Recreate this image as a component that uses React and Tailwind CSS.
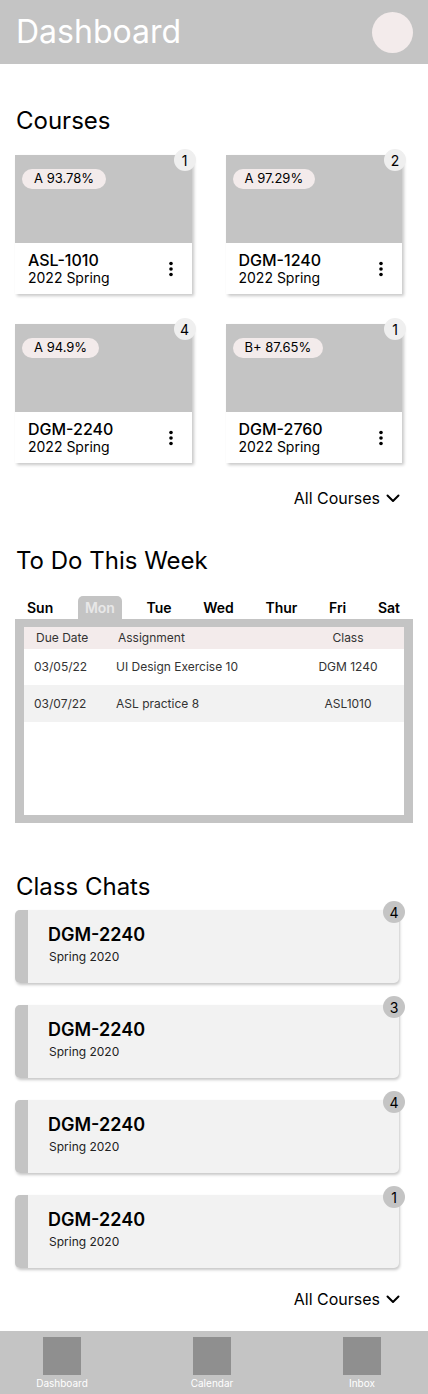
import React from "react";

const courses = [
  { grade: "A 93.78%", name: "ASL-1010", term: "2022 Spring", n: 1 },
  { grade: "A 97.29%", name: "DGM-1240", term: "2022 Spring", n: 2 },
  { grade: "A 94.9%", name: "DGM-2240", term: "2022 Spring", n: 4 },
  { grade: "B+ 87.65%", name: "DGM-2760", term: "2022 Spring", n: 1 },
];

const days = ["Sun", "Mon", "Tue", "Wed", "Thur", "Fri", "Sat"];

const chats = [4, 3, 4, 1];

function Kebab() {
  return (
    <svg width="6" height="16" viewBox="0 0 6 16" className="text-black">
      <circle cx="3" cy="2.5" r="1.8" fill="currentColor" />
      <circle cx="3" cy="8" r="1.8" fill="currentColor" />
      <circle cx="3" cy="13.5" r="1.8" fill="currentColor" />
    </svg>
  );
}

function AllCourses() {
  return (
    <div className="flex justify-end pr-[28px]">
      <div className="flex items-center gap-[6px] text-[16px] leading-6 text-black">
        <span>All Courses</span>
        <svg width="14" height="9" viewBox="0 0 14 9" fill="none">
          <path d="M1.5 1.5L7 7L12.5 1.5" stroke="black" strokeWidth="2" strokeLinecap="round" strokeLinejoin="round" />
        </svg>
      </div>
    </div>
  );
}

export default function App() {
  return (
    <div className="w-[428px] min-h-[1394px] bg-white flex flex-col" style={{ fontFamily: "Inter, 'Noto Sans', sans-serif" }}>
      <header className="h-16 bg-[#c4c4c4] flex items-center justify-between pl-4 pr-[15px]">
        <h1 className="text-[32px] leading-none text-white font-normal">Dashboard</h1>
        <div className="w-[41px] h-[41px] rounded-full bg-[#f3ebeb]" />
      </header>

      <main className="flex-1 flex flex-col">
        <h2 className="mt-[41px] pl-4 text-[24px] leading-8 text-black">Courses</h2>
        <div className="mt-[18px] ml-[15px] w-[387px] grid grid-cols-2 gap-x-[34px] gap-y-[30px]">
          {courses.map((c, i) => (
            <div key={i} className="relative shadow-[2px_2px_3px_rgba(0,0,0,0.22)]">
              <div className="h-[88px] bg-[#c4c4c4] pt-[10px] pl-[7px]">
                <span className="inline-flex items-center h-[20px] px-[12px] rounded-full bg-[#f3ebeb] text-[13px] text-black leading-none">
                  {c.grade}
                </span>
              </div>
              <div className="h-[51px] bg-white flex items-center justify-between pl-[13px] pr-[18px]">
                <div className="flex flex-col">
                  <span className="text-[16px] leading-[18px] text-black font-medium">{c.name}</span>
                  <span className="text-[14px] leading-[18px] text-black">{c.term}</span>
                </div>
                <Kebab />
              </div>
              <div className="absolute -top-[6px] -right-[4px] w-[22px] h-[22px] rounded-full bg-[#efefef] flex items-center justify-center text-[14px] text-black">
                {c.n}
              </div>
            </div>
          ))}
        </div>

        <div className="mt-[23px]">
          <AllCourses />
        </div>

        <h2 className="mt-[35px] pl-4 text-[24px] leading-8 text-black">To Do This Week</h2>

        <div className="mt-[19px] ml-[20px] w-[387px] h-[23px] flex justify-between items-end">
          {days.map((d) => (
            <div
              key={d}
              className={
                d === "Mon"
                  ? "h-[23px] px-[7px] flex items-center rounded-t-[5px] bg-[#c4c4c4] text-[14px] font-semibold text-[#e8e8e8]"
                  : "h-[23px] px-[7px] flex items-center text-[14px] font-semibold text-black"
              }
            >
              {d}
            </div>
          ))}
        </div>

        <div className="ml-[15px] w-[398px] h-[204px] bg-[#c4c4c4] pt-[8px] pb-[8px] px-[9px]">
          <div className="h-full bg-white flex flex-col text-[12px] text-[#333333]">
            <div className="h-[22px] bg-[#f3ebeb] flex items-center">
              <div className="w-[92px] pl-[12px]">Due Date</div>
              <div className="w-[192px] pl-[2px]">Assignment</div>
              <div className="w-[80px] text-center">Class</div>
            </div>
            <div className="h-[36px] bg-white flex items-center">
              <div className="w-[92px] pl-[10px]">03/05/22</div>
              <div className="w-[192px]">UI Design Exercise 10</div>
              <div className="w-[80px] text-center">DGM 1240</div>
            </div>
            <div className="h-[37px] bg-[#f2f2f2] flex items-center">
              <div className="w-[92px] pl-[10px]">03/07/22</div>
              <div className="w-[192px]">ASL practice 8</div>
              <div className="w-[80px] text-center">ASL1010</div>
            </div>
          </div>
        </div>

        <h2 className="mt-[48px] pl-4 text-[24px] leading-8 text-black">Class Chats</h2>

        <div className="mt-[7px] ml-[15px] w-[384px] flex flex-col gap-[22px]">
          {chats.map((n, i) => (
            <div key={i} className="relative h-[73px] rounded-[5px] bg-[#f2f2f2] flex overflow-visible shadow-[1px_2px_3px_rgba(0,0,0,0.22)]">
              <div className="w-[13px] h-full bg-[#c4c4c4] rounded-l-[5px]" />
              <div className="pl-[20px] pt-[13px] flex flex-col">
                <span className="text-[18px] leading-6 font-semibold text-black">DGM-2240</span>
                <span className="mt-[2px] text-[12px] leading-4 text-[#222222] pl-[1px]">Spring 2020</span>
              </div>
              <div className="absolute -top-[9px] -right-[6px] w-[22px] h-[22px] rounded-full bg-[#c4c4c4] flex items-center justify-center text-[14px] text-black">
                {n}
              </div>
            </div>
          ))}
        </div>

        <div className="mt-[19px] mb-[20px]">
          <AllCourses />
        </div>
      </main>

      <nav className="h-16 bg-[#c4c4c4] flex pl-[22px] gap-[70px] pt-[6px]">
        {["Dashboard", "Calendar", "Inbox"].map((l) => (
          <div key={l} className="w-[80px] flex flex-col items-center">
            <div className="w-[38px] h-[38px] bg-[#8f8f8f]" />
            <span className="mt-[1px] text-[10px] leading-[14px] text-white">{l}</span>
          </div>
        ))}
      </nav>
    </div>
  );
}
